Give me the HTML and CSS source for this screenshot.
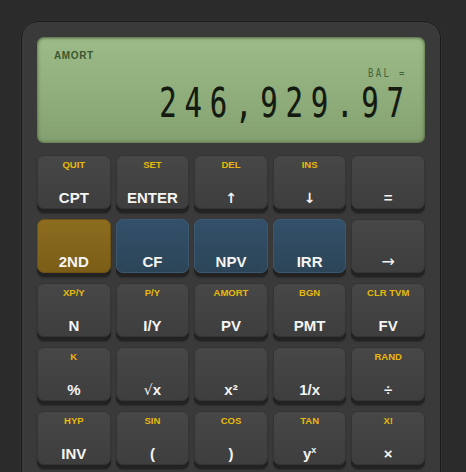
FILE: index.html
```html
<!DOCTYPE html>
<html lang="en">
<head>
<meta charset="utf-8">
<title>BA II Plus</title>
<link rel="stylesheet" href="styles.css">
</head>
<body>
<div class="calc">
  <div class="lcd">
    <div class="lcd-mode">AMORT</div>
    <div class="lcd-var"><span class="squeeze">BAL =</span></div>
    <div class="lcd-value"><span class="squeeze">246,929.97</span></div>
  </div>

  <div class="keys">
    <button class="key"><span class="alt">QUIT</span><span class="main">CPT</span></button>
    <button class="key"><span class="alt">SET</span><span class="main">ENTER</span></button>
    <button class="key"><span class="alt">DEL</span><span class="main sym">↑</span></button>
    <button class="key"><span class="alt">INS</span><span class="main sym">↓</span></button>
    <button class="key"><span class="alt"></span><span class="main">=</span></button>

    <button class="key key-2nd"><span class="alt"></span><span class="main">2ND</span></button>
    <button class="key key-cf"><span class="alt"></span><span class="main">CF</span></button>
    <button class="key key-cf"><span class="alt"></span><span class="main">NPV</span></button>
    <button class="key key-cf"><span class="alt"></span><span class="main">IRR</span></button>
    <button class="key"><span class="alt"></span><span class="main thin">→</span></button>

    <button class="key"><span class="alt">XP/Y</span><span class="main">N</span></button>
    <button class="key"><span class="alt">P/Y</span><span class="main">I/Y</span></button>
    <button class="key"><span class="alt">AMORT</span><span class="main">PV</span></button>
    <button class="key"><span class="alt">BGN</span><span class="main">PMT</span></button>
    <button class="key"><span class="alt">CLR TVM</span><span class="main">FV</span></button>

    <button class="key"><span class="alt">K</span><span class="main">%</span></button>
    <button class="key"><span class="alt"></span><span class="main"><span class="root">√</span>x</span></button>
    <button class="key"><span class="alt"></span><span class="main">x²</span></button>
    <button class="key"><span class="alt"></span><span class="main">1/x</span></button>
    <button class="key"><span class="alt">RAND</span><span class="main">÷</span></button>

    <button class="key"><span class="alt">HYP</span><span class="main">INV</span></button>
    <button class="key"><span class="alt">SIN</span><span class="main">(</span></button>
    <button class="key"><span class="alt">COS</span><span class="main">)</span></button>
    <button class="key"><span class="alt">TAN</span><span class="main">y<sup>x</sup></span></button>
    <button class="key"><span class="alt">X!</span><span class="main">×</span></button>
  </div>
</div>
</body>
</html>
```

FILE: styles.css
```css
html, body {
  margin: 0;
  padding: 0;
}

body {
  background: #2b2b2b;
  height: 472px;
  overflow: hidden;
  font-family: "Liberation Sans", Arial, sans-serif;
}

/* calculator shell */
.calc {
  margin: 21px 0 0 21px;
  width: 388px;
  padding: 15px 15px 30px;
  background: #3a3a3a;
  border: 1px solid #1b1b1b;
  border-radius: 17px;
  box-shadow: 0 0 0 1px #303030;
}

/* LCD panel */
.lcd {
  height: 106px;
  box-sizing: border-box;
  padding: 13px 20px 0 17px;
  border-radius: 7px;
  background: linear-gradient(180deg, #9dbb89 0%, #91af7d 50%, #84a070 100%);
  box-shadow: inset 0 0 4px rgba(40, 60, 25, 0.55), inset 0 1px 2px rgba(30, 45, 20, 0.4);
  display: flex;
  flex-direction: column;
}

.lcd-mode {
  font-size: 10px;
  font-weight: bold;
  line-height: 12px;
  letter-spacing: 0.6px;
  color: #3c5730;
}

.lcd-var {
  margin-top: 5px;
  text-align: right;
  font-family: "DejaVu Sans Mono", monospace;
  font-size: 11.5px;
  line-height: 12px;
  letter-spacing: 3px;
  color: #46633a;
  margin-right: -2px;
}

.lcd-value {
  margin-top: 3px;
  height: 42px;
  text-align: right;
  font-family: "DejaVu Sans Mono", monospace;
  font-size: 40px;
  line-height: 42px;
  letter-spacing: 11px;
  color: #141a10;
  margin-right: -7px;
  text-shadow: 0.5px 0 0 rgba(20, 40, 30, 0.5);
}

.squeeze {
  display: inline-block;
  transform: scaleX(0.72);
  transform-origin: right center;
}

.lcd-var .squeeze {
  transform: scaleX(0.78);
}

/* keypad */
.keys {
  margin-top: 12px;
  display: grid;
  grid-template-columns: repeat(5, 1fr);
  column-gap: 5px;
  row-gap: 10px;
}

.key {
  position: relative;
  height: 54px;
  padding: 0;
  margin: 0;
  border: 1px solid #353535;
  border-radius: 7px;
  background: linear-gradient(180deg, #474747 0%, #3e3e3e 100%);
  box-shadow: 0 4px 0 #222222, 0 5px 2px rgba(0, 0, 0, 0.25);
  display: flex;
  flex-direction: column;
  align-items: center;
  font-family: "Liberation Sans", Arial, sans-serif;
  cursor: pointer;
}

.key-2nd {
  background: linear-gradient(180deg, #8c6d1f 0%, #7b5d17 100%);
  border-color: #6d5315;
}

.key-cf {
  background: linear-gradient(180deg, #33506a 0%, #2c4558 100%);
  border-color: #3b5a72;
}

.alt {
  margin-top: 3px;
  height: 12px;
  line-height: 12px;
  font-size: 9.5px;
  font-weight: bold;
  color: #e8b90c;
}

.main {
  margin-top: 18px;
  height: 18px;
  line-height: 18px;
  font-size: 15px;
  font-weight: bold;
  color: #f4f4f4;
}

.main.sym {
  font-family: "DejaVu Sans", sans-serif;
  font-size: 14px;
}

.main.thin {
  font-family: "DejaVu Sans", sans-serif;
  font-weight: normal;
  font-size: 16px;
}

.root {
  font-family: "DejaVu Sans", sans-serif;
  font-weight: normal;
  font-size: 14px;
}

.main sup {
  font-size: 9px;
  line-height: 0;
  vertical-align: 6px;
}
```
